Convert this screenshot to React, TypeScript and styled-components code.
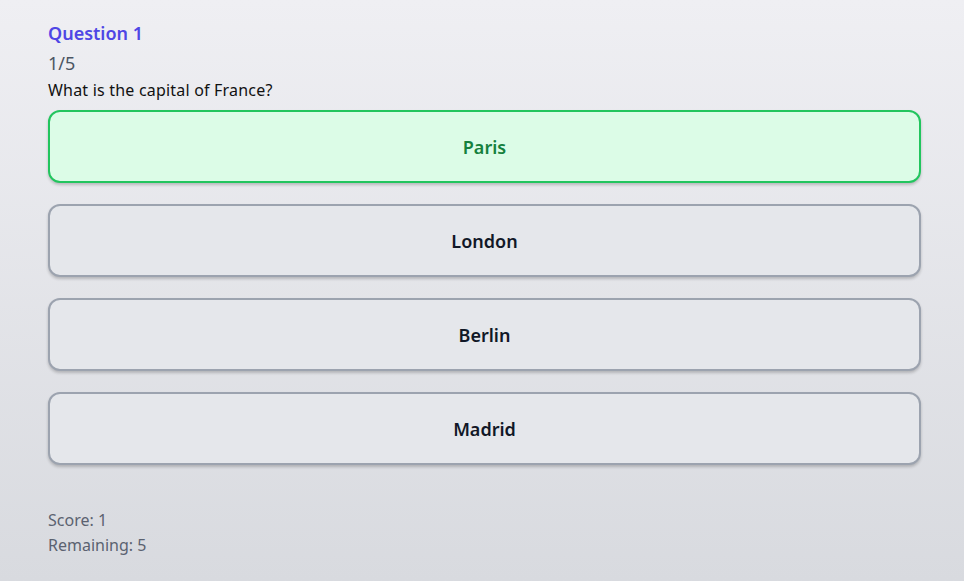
import React from "react";
import styled, { createGlobalStyle } from "styled-components";

const Global = createGlobalStyle`
  html, body { margin: 0; padding: 0; }
  body {
    font-family: "Noto Sans", "Open Sans", sans-serif;
    background: linear-gradient(180deg, #efeff3 0%, #d8dadf 100%);
    min-height: 581px;
  }
`;

const Page = styled.div`
  min-height: 581px;
  box-sizing: border-box;
  padding: 19px 43px 20px 48px;
  display: flex;
  flex-direction: column;
`;

const Heading = styled.h2`
  margin: 0;
  font-size: 18px;
  line-height: 28px;
  font-weight: 600;
  color: #4f46e5;
`;

const Progress = styled.div`
  margin-top: 2px;
  font-size: 18px;
  line-height: 28px;
  color: #4b5563;
`;

const Prompt = styled.p`
  margin: 1px 0 0;
  font-size: 16px;
  line-height: 24px;
  letter-spacing: 0.2px;
  color: #111;
`;

const Options = styled.div`
  margin-top: 8px;
  display: flex;
  flex-direction: column;
  gap: 21px;
`;

const Option = styled.button<{ $correct?: boolean }>`
  height: 73px;
  box-sizing: border-box;
  border-radius: 12px;
  border: 2px solid ${(p) => (p.$correct ? "#22c55e" : "#9ca3af")};
  background: ${(p) => (p.$correct ? "#dcfce7" : "#e5e7eb")};
  color: ${(p) => (p.$correct ? "#15803d" : "#111827")};
  font-family: inherit;
  font-size: 18px;
  font-weight: 600;
  box-shadow: 0 2px 3px rgba(0, 0, 0, 0.2);
  cursor: pointer;
  display: flex;
  align-items: center;
  justify-content: center;
`;

const Stats = styled.div`
  margin-top: 43px;
  font-size: 16px;
  line-height: 25px;
  color: #5b6270;
`;

const options = ["Paris", "London", "Berlin", "Madrid"];

export default function App() {
  return (
    <>
      <Global />
      <Page>
        <Heading>Question 1</Heading>
        <Progress>1/5</Progress>
        <Prompt>What is the capital of France?</Prompt>
        <Options>
          {options.map((o, i) => (
            <Option key={o} $correct={i === 0}>
              {o}
            </Option>
          ))}
        </Options>
        <Stats>
          <div>Score: 1</div>
          <div>Remaining: 5</div>
        </Stats>
      </Page>
    </>
  );
}
